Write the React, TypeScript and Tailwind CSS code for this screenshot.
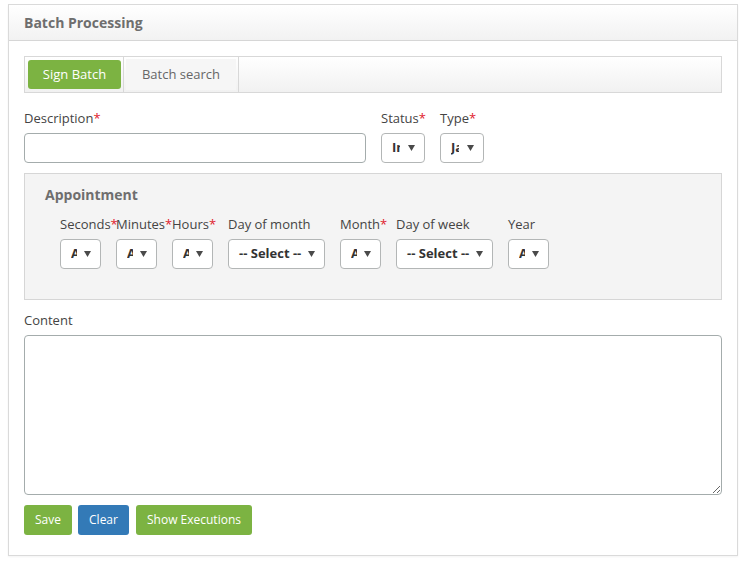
import React from 'react';

const Req = () => <span className="text-[#e0202c]">*</span>;

const Arrow = () => (
  <svg width="7" height="6" viewBox="0 0 7 6" className="shrink-0">
    <path d="M0 0 H7 L3.5 6 Z" fill="#4a4a4a" />
  </svg>
);

interface SelectProps {
  width: string;
  text: string;
  clip?: string;
}

const FakeSelect: React.FC<SelectProps> = ({ width, text, clip }) => (
  <div className={`${width} h-[30px] border border-[#b3b6b6] rounded-[4px] bg-white flex items-center pl-[10px] pr-[9px] justify-between`}>
    <span className={`${clip ?? ''} whitespace-nowrap text-[13px] font-bold text-[#333]`}>{text}</span>
    <Arrow />
  </div>
);

const cols = [
  { label: 'Seconds', req: true, w: 'w-[41px]', text: 'A', clip: 'w-[6px] overflow-hidden' },
  { label: 'Minutes', req: true, w: 'w-[41px]', text: 'A', clip: 'w-[6px] overflow-hidden' },
  { label: 'Hours', req: true, w: 'w-[41px]', text: 'A', clip: 'w-[6px] overflow-hidden' },
  { label: 'Day of month', req: false, w: 'w-[97px]', text: '-- Select --', clip: undefined },
  { label: 'Month', req: true, w: 'w-[41px]', text: 'A', clip: 'w-[6px] overflow-hidden' },
  { label: 'Day of week', req: false, w: 'w-[97px]', text: '-- Select --', clip: undefined },
  { label: 'Year', req: false, w: 'w-[41px]', text: 'A', clip: 'w-[6px] overflow-hidden' },
];

export default function App() {
  return (
    <div className="w-[747px] h-[563px] bg-white pt-[4px] pl-[8px]" style={{ fontFamily: '"Open Sans", sans-serif' }}>
      <div className="w-[730px] h-[552px] border border-[#dadada] bg-white shadow-[0_1px_2px_rgba(0,0,0,0.05)]">
        <div className="h-[36px] border-b border-[#d6d6d6] bg-gradient-to-b from-white to-[#f2f2f2] px-[15px] flex items-center">
          <h2 className="text-[14px] font-bold text-[#6e6e6e]">Batch Processing</h2>
        </div>

        <div className="px-[15px] pt-[15px]">
          <div className="h-[37px] border border-[#d8d8d8] bg-gradient-to-b from-white to-[#f1f1f1] flex items-stretch pl-[3px]">
            <button className="self-center h-[29px] w-[93px] rounded-[3px] bg-[#7cb342] text-white text-[13px]">Sign Batch</button>
            <div className="ml-[2px] w-[116px] border-l border-r border-[#d8d8d8] p-[2px]">
              <div className="h-full bg-[#f6f6f6] flex items-center justify-center text-[13px] text-[#666]">Batch search</div>
            </div>
          </div>

          <div className="mt-[16px] flex gap-[15px] text-[13px] text-[#444]">
            <div className="w-[342px]">
              <div className="h-[18px] leading-[18px]">Description<Req /></div>
              <div className="mt-[6px] h-[30px] border border-[#a4acac] rounded-[4px] bg-white" />
            </div>
            <div className="w-[44px]">
              <div className="h-[18px] leading-[18px] whitespace-nowrap">Status<Req /></div>
              <div className="mt-[6px]"><FakeSelect width="w-[44px]" text="In" clip="w-[8px] overflow-hidden" /></div>
            </div>
            <div className="w-[44px]">
              <div className="h-[18px] leading-[18px] whitespace-nowrap">Type<Req /></div>
              <div className="mt-[6px]"><FakeSelect width="w-[44px]" text="Ja" clip="w-[8px] overflow-hidden" /></div>
            </div>
          </div>

          <div className="mt-[10px] h-[127px] border border-[#d6d6d6] bg-[#f4f4f4] pt-[11px] px-[20px]">
            <h3 className="h-[20px] leading-[20px] text-[14px] font-bold text-[#6e6e6e]">Appointment</h3>
            <div className="mt-[10px] ml-[15px] flex gap-[15px] text-[13px] text-[#444]">
              {cols.map((c) => (
                <div key={c.label} className={c.w}>
                  <div className="h-[18px] leading-[18px] whitespace-nowrap">{c.label}{c.req && <Req />}</div>
                  <div className="mt-[6px]"><FakeSelect width={c.w} text={c.text} clip={c.clip} /></div>
                </div>
              ))}
            </div>
          </div>

          <div className="mt-[11px] h-[18px] leading-[18px] text-[13px] text-[#444]">Content</div>
          <textarea readOnly className="mt-[6px] block w-[698px] h-[160px] border border-[#a4acac] rounded-[4px] bg-white outline-none" />

          <div className="mt-[10px] flex gap-[6px] text-[12px] text-white">
            <button className="h-[30px] w-[48px] rounded-[3px] bg-[#7cb342]">Save</button>
            <button className="h-[30px] w-[51px] rounded-[3px] bg-[#337ab7]">Clear</button>
            <button className="ml-[1px] h-[30px] w-[116px] rounded-[3px] bg-[#7cb342]">Show Executions</button>
          </div>
        </div>
      </div>
    </div>
  );
}
